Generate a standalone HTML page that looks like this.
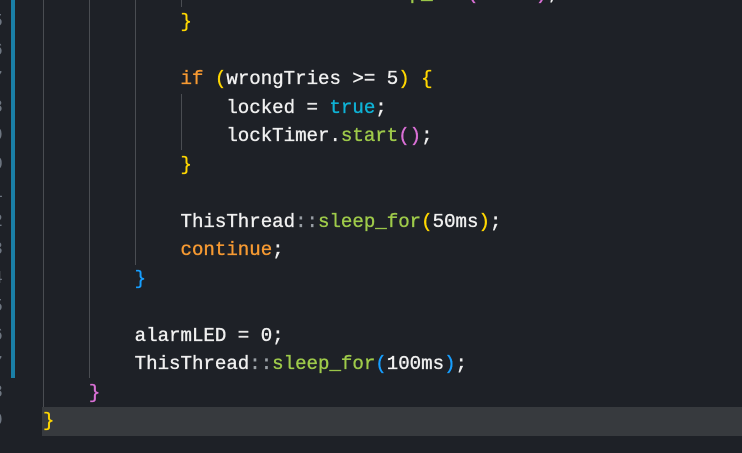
<!DOCTYPE html>
<html><head><style>
body{margin:0;width:742px;height:453px;background:#1e2127;overflow:hidden;position:relative;font-family:"Liberation Mono",monospace;font-size:19.1px;}
.l{position:absolute;left:43px;height:28.5px;line-height:28.5px;white-space:pre;color:#f0f0f0;-webkit-text-stroke:0.35px currentColor;}
.n{position:absolute;left:-8px;height:28.5px;line-height:28.5px;color:#6e7681;font-size:18px;}
.k{color:#f79a32}.y{color:#ffd700}.p{color:#da70d6}.b{color:#179fff}.f{color:#9fcb4a}.c{color:#0fb3d6}.g{color:#9aa0a6}
.v{position:absolute;width:1px;background:#4a4d52}
</style></head><body>
<div style="position:absolute;left:42px;top:407px;width:700px;height:29px;background:#373a3e"></div>
<div style="position:absolute;left:11px;top:0;width:4px;height:378px;background:#1a7fa6"></div>
<div class="v" style="left:43px;top:0;height:407px"></div>
<div class="v" style="left:89px;top:0;height:378px"></div>
<div class="v" style="left:135px;top:0;height:265px"></div>
<div class="v" style="left:181px;top:0;height:7px"></div>
<div class="v" style="left:181px;top:94px;height:56px"></div>
<div class="l" style="top:-20.5px">                <span>ThisThread</span><span class="g">::</span><span class="f">sleep_for</span><span class="p">(</span>500ms<span class="p">)</span>;</div>
<div class="l" style="top:8px">            <span class="y">}</span></div>
<div class="l" style="top:65px">            <span class="k">if</span> <span class="y">(</span>wrongTries &gt;= 5<span class="y">)</span> <span class="y">{</span></div>
<div class="l" style="top:93.5px">                locked = <span class="c">true</span>;</div>
<div class="l" style="top:122px">                lockTimer.<span class="f">start</span><span class="p">()</span>;</div>
<div class="l" style="top:150.5px">            <span class="y">}</span></div>
<div class="l" style="top:207.5px">            ThisThread<span class="g">::</span><span class="f">sleep_for</span><span class="y">(</span>50ms<span class="y">)</span>;</div>
<div class="l" style="top:236px">            <span class="k">continue</span>;</div>
<div class="l" style="top:264.5px">        <span class="b">}</span></div>
<div class="l" style="top:321.5px">        alarmLED = 0;</div>
<div class="l" style="top:350px">        ThisThread<span class="g">::</span><span class="f">sleep_for</span><span class="b">(</span>100ms<span class="b">)</span>;</div>
<div class="l" style="top:378.5px">    <span class="p">}</span></div>
<div class="l" style="top:407px"><span class="y">}</span></div>
<div class="n" style="top:8px">5</div><div class="n" style="top:36.5px">6</div><div class="n" style="top:65px">7</div><div class="n" style="top:93.5px">8</div><div class="n" style="top:122px">9</div><div class="n" style="top:150.5px">0</div><div class="n" style="top:179px">1</div><div class="n" style="top:207.5px">2</div><div class="n" style="top:236px">3</div><div class="n" style="top:264.5px">4</div><div class="n" style="top:293px">5</div><div class="n" style="top:321.5px">6</div><div class="n" style="top:350px">7</div><div class="n" style="top:378.5px">8</div><div class="n" style="top:407px">9</div>
</body></html>
